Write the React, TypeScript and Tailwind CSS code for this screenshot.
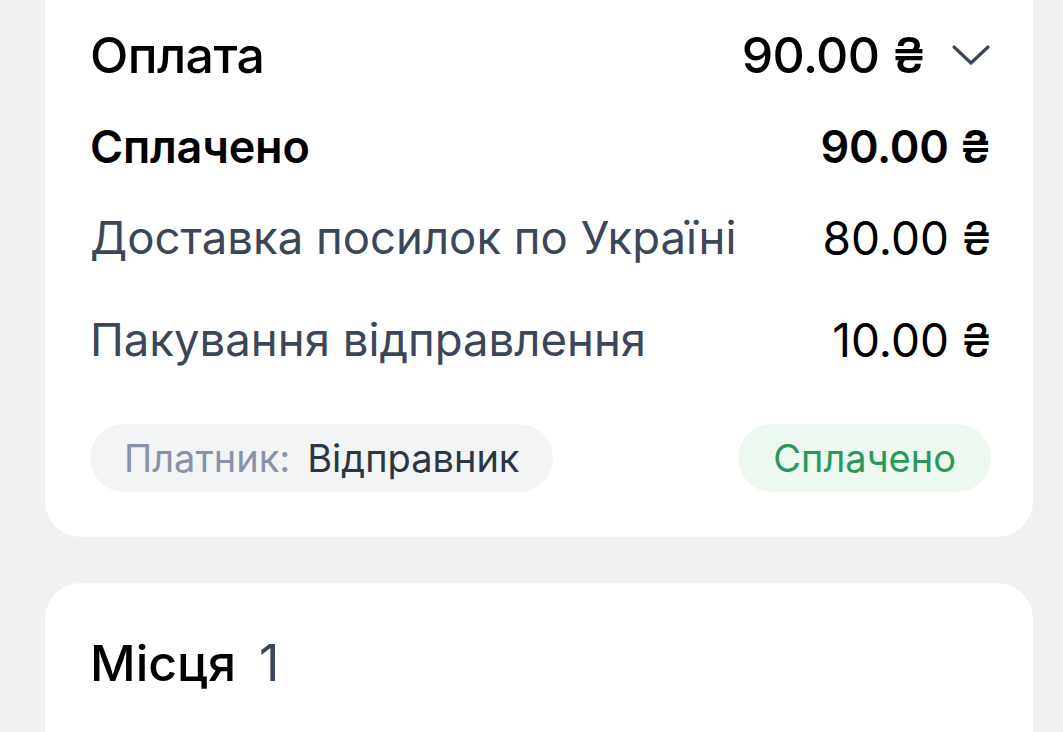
import React from "react";

function Chevron() {
  return (
    <svg width="40" height="24" viewBox="0 0 40 24" fill="none" className="ml-[26px]">
      <path d="M3 4 L20 20 L37 4" stroke="#3b4657" strokeWidth="3.2" strokeLinecap="round" strokeLinejoin="round" />
    </svg>
  );
}

export default function App() {
  return (
    <div className="h-[732px] w-[1063px] bg-[#f1f1f4] overflow-hidden" style={{ fontFamily: "Inter, 'Noto Sans', sans-serif" }}>
      <div className="ml-[45px] w-[988px] bg-white rounded-b-[36px] pt-[23px] pb-[45px] pl-[45px] pr-[42px]">
        <div className="flex items-center justify-between h-[64px]">
          <span className="text-[50px] font-medium text-black tracking-[-0.6px]">Оплата</span>
          <div className="flex items-center">
            <span className="text-[50px] font-medium text-black tracking-[-0.6px]">90.00 ₴</span>
            <Chevron />
          </div>
        </div>
        <div className="flex items-center justify-between h-[56px] mt-[32px]">
          <span className="text-[45px] font-semibold text-black tracking-[-0.2px]">Сплачено</span>
          <span className="text-[45px] font-semibold text-black tracking-[-0.3px]">90.00 ₴</span>
        </div>
        <div className="flex items-center justify-between h-[56px] mt-[35px]">
          <span className="text-[45.5px] text-[#3b4759]">Доставка посилок по Україні</span>
          <span className="text-[46px] text-black">80.00 ₴</span>
        </div>
        <div className="flex items-center justify-between h-[56px] mt-[46px]">
          <span className="text-[45.5px] text-[#3b4759]">Пакування відправлення</span>
          <span className="text-[46px] text-black">10.00 ₴</span>
        </div>
        <div className="flex items-center justify-between mt-[56px]">
          <div className="h-[68px] rounded-full bg-[#f3f4f6] flex items-center px-[34px] text-[38px]">
            <span className="text-[#8993a5]">Платник:</span>
            <span className="text-[#2c3645] ml-[17px]">Відправник</span>
          </div>
          <div className="h-[68px] rounded-full bg-[#edf8f1] flex items-center px-[35px] text-[38px] text-[#28985c]">
            Сплачено
          </div>
        </div>
      </div>
      <div className="ml-[45px] w-[988px] bg-white rounded-t-[36px] mt-[46px] h-[200px] pt-[52px] pl-[45px]">
        <div className="flex items-center h-[56px]">
          <span className="text-[50px] font-medium text-black">Місця</span>
          <span className="text-[50px] text-[#3b4759] ml-[23px]">1</span>
        </div>
      </div>
    </div>
  );
}
